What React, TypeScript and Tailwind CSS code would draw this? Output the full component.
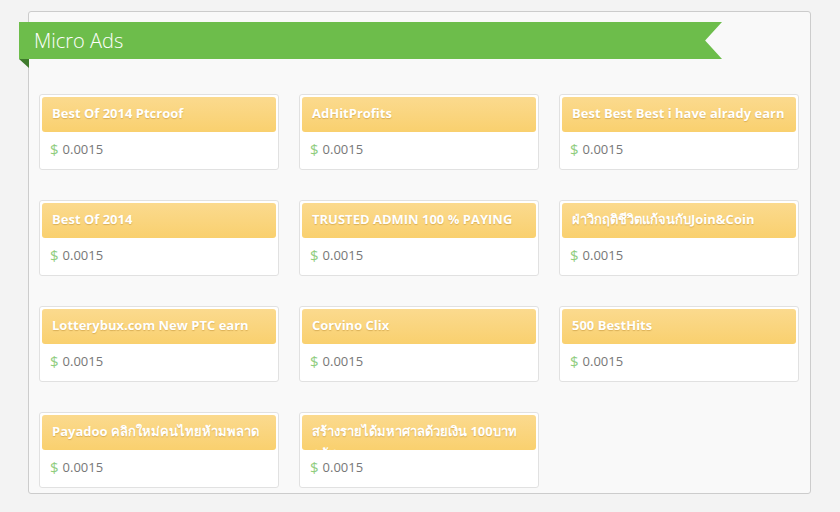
import React from "react";

type Ad = {
  id: number;
  title: string;
  price: string;
};

const ads: Ad[] = [
  { id: 1, title: "Best Of 2014 Ptcroof", price: "0.0015" },
  { id: 2, title: "AdHitProfits", price: "0.0015" },
  { id: 3, title: "Best Best Best i have alrady earn", price: "0.0015" },
  { id: 4, title: "Best Of 2014", price: "0.0015" },
  { id: 5, title: "TRUSTED ADMIN 100 % PAYING", price: "0.0015" },
  { id: 6, title: "ฝ่าวิกฤติชีวิตแก้จนกับJoin&Coin", price: "0.0015" },
  { id: 7, title: "Lotterybux.com New PTC earn", price: "0.0015" },
  { id: 8, title: "Corvino Clix", price: "0.0015" },
  { id: 9, title: "500 BestHits", price: "0.0015" },
  { id: 10, title: "Payadoo คลิกใหม่คนไทยห้ามพลาด", price: "0.0015" },
  { id: 11, title: "สร้างรายได้มหาศาลด้วยเงิน 100บาท ครับ", price: "0.0015" },
];

function Ribbon() {
  return (
    <div className="relative -ml-[10px] mt-[10px] w-[703px]">
      <div className="flex h-[37px] items-center bg-[#6dbd4b] pl-[15px] [clip-path:polygon(0_0,100%_0,97.6%_50%,100%_100%,0_100%)]">
        <h2 className="text-[20px] font-light leading-none text-white">
          Micro Ads
        </h2>
      </div>
      <svg
        className="absolute left-0 top-[37px]"
        width="10"
        height="9"
        viewBox="0 0 10 9"
      >
        <polygon points="0,0 10,0 10,9" fill="#3f7a2c" />
      </svg>
    </div>
  );
}

function AdCard({ ad }: { ad: Ad }) {
  return (
    <article className="h-[76px] rounded-[3px] border border-[#e1e1e1] bg-white p-[2px]">
      <div className="h-[35px] overflow-hidden rounded-[3px] bg-gradient-to-b from-[#fbda8e] to-[#f9d06e] px-[10px] pt-[5px]">
        <p className="text-[13px] font-bold leading-[22px] text-white [text-shadow:0_1px_1px_rgba(160,110,20,0.35)]">
          {ad.title}
        </p>
      </div>
      <div className="flex items-center pl-[8px] pt-[10px]">
        <span className="text-[15px] leading-none text-[#8fcd7e]">$</span>
        <span className="ml-[4px] text-[13px] leading-none text-[#777]">
          {ad.price}
        </span>
      </div>
    </article>
  );
}

export default function App() {
  return (
    <main
      className="h-[512px] overflow-hidden bg-[#f3f3f3] pl-[28px] pt-[11px]"
      style={{ fontFamily: '"Open Sans", "Noto Sans", sans-serif' }}
    >
      <section className="h-[483px] w-[783px] rounded-[3px] border border-[#cccccc] bg-[#f9f9f9]">
        <Ribbon />
        <div className="grid grid-cols-[240px_240px_240px] gap-x-[20px] gap-y-[30px] pl-[10px] pt-[35px]">
          {ads.map((ad) => (
            <AdCard key={ad.id} ad={ad} />
          ))}
        </div>
      </section>
    </main>
  );
}
